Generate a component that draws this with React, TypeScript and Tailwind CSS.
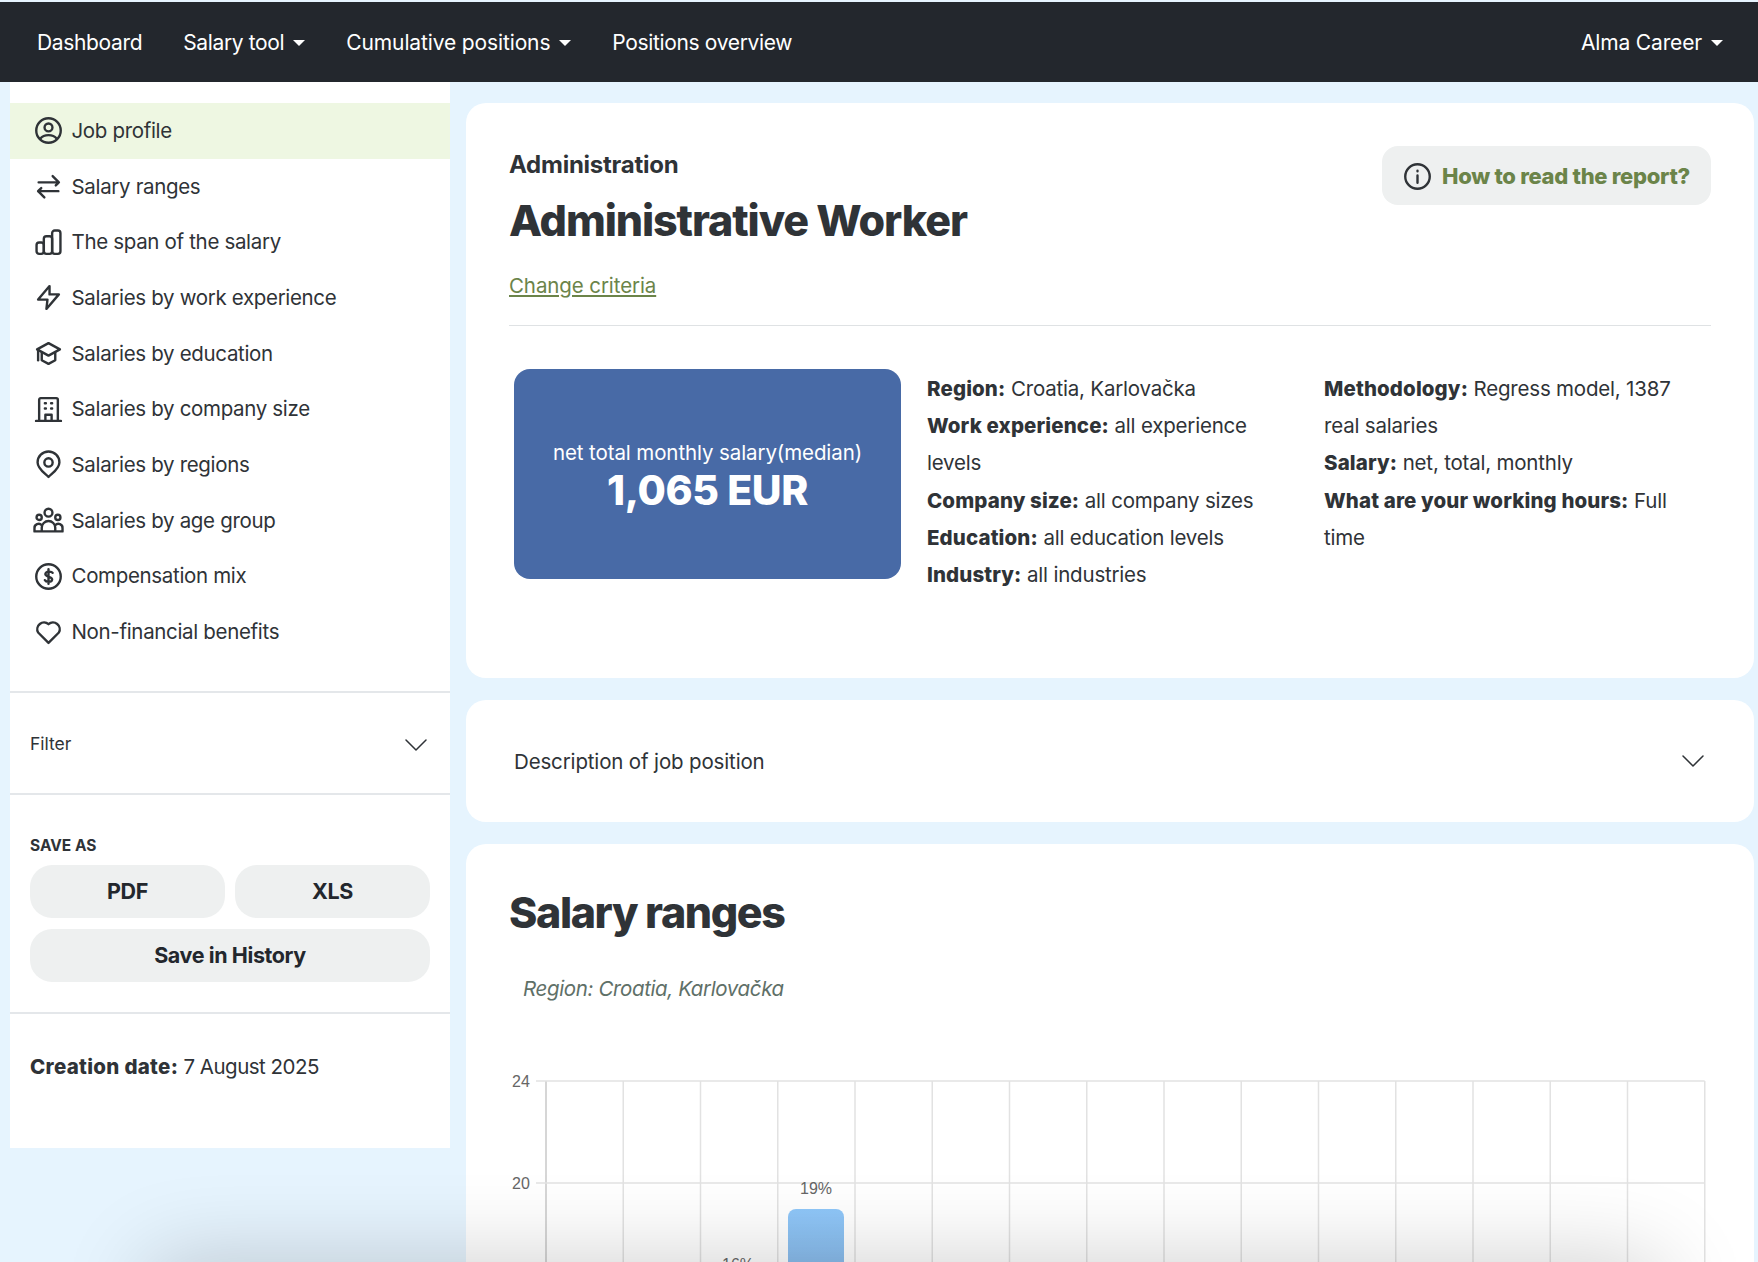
import React from "react";

const Ic: React.FC<{ children: React.ReactNode }> = ({ children }) => (
  <svg viewBox="0 0 26 26" fill="none" stroke="#2f3337" strokeWidth={2.300} strokeLinecap="round" strokeLinejoin="round" className="w-[27px] h-[27px] shrink-0 overflow-visible">
    {children}
  </svg>
);

const Chevron = () => (
  <svg viewBox="0 0 22 12" fill="none" stroke="#2f3337" strokeWidth={1.500} strokeLinecap="round" strokeLinejoin="round" className="w-[22px] h-[12px] shrink-0">
    <path d="M1 1l10 10L21 1" />
  </svg>
);

const menu: { label: string; active?: boolean; icon: React.ReactNode }[] = [
  { label: "Job profile", active: true, icon: <><circle cx="13" cy="13" r="11.800" /><circle cx="13" cy="10" r="3.800" /><path d="M5 21c2-2.500 5-3.500 8-3.500s6 1 8 3.500" /></> },
  { label: "Salary ranges", icon: <path d="M3.500 9H23M17 3l6 6-3 3M22.500 17.500H3M9 23.500l-6-6 3-3" /> },
  { label: "The span of the salary", icon: <><rect x="1.500" y="13" width="7" height="11" rx="2.500" /><rect x="8.500" y="7" width="8" height="17" rx="2.500" /><rect x="16.500" y="1.500" width="8" height="22.500" rx="2.500" /></> },
  { label: "Salaries by work experience", icon: <path d="M14 2 3 15h9l-1 9 12-14h-9z" /> },
  { label: "Salaries by education", icon: <><path d="M13 3 2 9l11 6 11-6z" /><path d="M6.500 12v7.500l6.500 3.500 6.500-3.500V12" /><path d="M3 10v9.500" /></> },
  { label: "Salaries by company size", icon: <><path d="M4 24V3.500A1.500 1.500 0 0 1 5.500 2h15A1.500 1.500 0 0 1 22 3.500V24M1 24h24" /><path d="M10 24v-6h6v6M9.500 7h1M15.500 7h1M9.500 12h1M15.500 12h1" /></> },
  { label: "Salaries by regions", icon: <><path d="M13 25C9 21 2.500 17 2.500 11a10.500 10.500 0 0 1 21 0c0 6-6.500 10-10.500 14z" /><circle cx="13" cy="11" r="4" /></> },
  { label: "Salaries by age group", icon: <><circle cx="13" cy="5.500" r="3.800" /><circle cx="4" cy="10" r="2.500" /><circle cx="22" cy="10" r="2.500" /><path d="M6.500 23v-3a6.500 6.500 0 0 1 13 0v3M-0.500 23.500v-3a4 4 0 0 1 7-3M26.500 23.500v-3a4 4 0 0 0-7-3M-0.500 23.500h27" /></> },
  { label: "Compensation mix", icon: <><circle cx="13" cy="13" r="11.800" /><path d="M17 9.500c-1-1.500-6.500-2-7 1s7 2.500 6.500 5.500-6 2.500-7 .5M13 6v14" /></> },
  { label: "Non-financial benefits", icon: <path d="M13 23 3 13a6.500 6.500 0 0 1 10-8 6.500 6.500 0 0 1 10 8z" /> },
];

const Caret = () => (
  <span className="ml-[9px] inline-block w-0 h-0 border-x-[6px] border-x-transparent border-t-[6px] border-t-white" />
);

const Navbar = () => (
  <nav className="mt-[2px] pt-[2px] h-[80px] bg-[#23272d] flex items-center justify-between pl-[37px] pr-[35px] text-white text-[21px] tracking-[-0.35px] shrink-0">
    <div className="flex items-center gap-[41px]">
      <span>Dashboard</span>
      <span className="flex items-center">Salary tool<Caret /></span>
      <span className="flex items-center tracking-[-0.13px]">Cumulative positions<Caret /></span>
      <span>Positions overview</span>
    </div>
    <span className="flex items-center tracking-[-0.15px]">Alma Career<Caret /></span>
  </nav>
);

const Sidebar = () => (
  <aside className="ml-[10px] w-[440px] h-[1066px] bg-white text-[#2f3337] shrink-0 flex flex-col">
    <ul className="pt-[21px] h-[611px] border-b-2 border-[#e4e7ea]">
      {menu.map((m) => (
        <li key={m.label} className={`h-[55.7px] flex items-center gap-[9.500px] pl-[25px] text-[20.500px] tracking-[-0.33px] ${m.active ? "bg-[#eef7e2]" : ""}`}>
          <Ic>{m.icon}</Ic>
          <span className="pt-[1px]">{m.label}</span>
        </li>
      ))}
    </ul>
    <div className="h-[102px] pt-[3px] flex items-center justify-between pl-[20px] pr-[23px] border-b-2 border-[#e4e7ea] text-[17.500px]">
      <span>Filter</span>
      <Chevron />
    </div>
    <div className="px-[20px] pt-[41px] h-[219px] border-b-2 border-[#e4e7ea]">
      <div className="text-[15.500px] font-bold leading-5 mb-[9px]">SAVE AS</div>
      <div className="grid grid-cols-2 gap-x-[10px] gap-y-[11px] text-[#23272d] text-[21.500px] font-bold tracking-[-0.4px]">
        <button className="h-[53px] rounded-[22px] bg-[#eef0f0]">PDF</button>
        <button className="h-[53px] rounded-[22px] bg-[#eef0f0]">XLS</button>
        <button className="col-span-2 h-[53px] rounded-[22px] bg-[#eef0f0]">Save in History</button>
      </div>
    </div>
    <div className="pl-[20px] pt-[38px] text-[20.500px] tracking-[-0.5px]"><b className="font-extrabold tracking-[0.3px]">Creation date:</b> 7 August 2025</div>
  </aside>
);

const Chart = () => {
  const xs = Array.from({ length: 16 }, (_, i) => 80 + i * 77.25);
  return (
    <svg viewBox="0 0 1288 200" className="w-[1288px] h-[200px] block">
      <defs>
        <linearGradient id="bar" x1="0" y1="0" x2="0" y2="1">
          <stop offset="0" stopColor="#8fc7f9" />
          <stop offset="1" stopColor="#8abcec" />
        </linearGradient>
      </defs>
      {xs.map((x, i) => <line key={x} x1={x} x2={x} y1={11} y2={200} stroke={i === 0 ? "#c9c9c9" : "#e2e2e2"} strokeWidth={1.500} />)}
      {[11, 113].map((y) => <line key={y} x1={70} x2={1238.700} y1={y} y2={y} stroke="#e2e2e2" strokeWidth={1.500} />)}
      <text x={46} y={17} fontSize={16} fontFamily="Liberation Sans" fill="#666">24</text>
      <text x={46} y={119} fontSize={16} fontFamily="Liberation Sans" fill="#666">20</text>
      <text x={350} y={124} fontSize={16} fontFamily="Liberation Sans" fill="#666" textAnchor="middle">19%</text>
      <text x={272} y={199.500} fontSize={16} fontFamily="Liberation Sans" fill="#666" textAnchor="middle">16%</text>
      <path d="M322 200v-53a8 8 0 0 1 8-8h40a8 8 0 0 1 8 8v53z" fill="url(#bar)" />
    </svg>
  );
};

const Main = () => (
  <main className="ml-[16px] mr-[4px] pt-[21px] flex-1 flex flex-col gap-[22px] text-[#2f3337]">
    <section className="bg-white rounded-[20px] h-[575px] px-[43px] shrink-0">
      <div className="h-[223px] border-b border-[#dfe2e4] relative">
        <div className="pt-[46px] text-[24px] font-bold leading-8 tracking-[-0.25px]">Administration</div>
        <h1 className="text-[43px] font-extrabold leading-[56px] mt-[11px] tracking-[-1.1px]">Administrative Worker</h1>
        <a className="block mt-[23px] text-[20.500px] tracking-[-0.1px] text-[#6b8449] underline">Change criteria</a>
        <button className="absolute right-0 top-[43px] w-[329px] h-[59px] pt-[1px] rounded-[16px] bg-[#eef0f0] flex items-center pl-[22px] gap-[11px] text-[22px] font-extrabold text-[#6b8449] tracking-[-0.3px]">
          <Ic><circle cx="13" cy="13" r="11.800" /><path d="M13 12v7M13 7.500v.5" /></Ic>
          How to read the report?
        </button>
      </div>
      <div className="flex pt-[43px] text-[20.500px] leading-[37.200px] tracking-[-0.2px]">
        <div className="ml-[5px] w-[387px] h-[210px] pt-[3px] rounded-[16px] bg-[#486aa6] text-white flex flex-col items-center justify-center shrink-0">
          <div className="text-[20.500px] leading-7 tracking-[-0.1px]">net total monthly salary(median)</div>
          <div className="text-[41px] font-extrabold leading-[46px] tracking-[-0.4px]">1,065 EUR</div>
        </div>
        <div className="ml-[26px] mr-[57px] mt-[1px] w-[340px] shrink-0">
          <div><b className="font-extrabold tracking-[0.12px]">Region:</b> Croatia, Karlovačka</div>
          <div><b className="font-extrabold tracking-[0.12px]">Work experience:</b> all experience levels</div>
          <div><b className="font-extrabold tracking-[0.12px]">Company size:</b> all company sizes</div>
          <div><b className="font-extrabold tracking-[0.12px]">Education:</b> all education levels</div>
          <div><b className="font-extrabold tracking-[0.12px]">Industry:</b> all industries</div>
        </div>
        <div className="w-[360px] mt-[1px]">
          <div><b className="font-extrabold tracking-[0.12px]">Methodology:</b> Regress model, 1387 real salaries</div>
          <div><b className="font-extrabold tracking-[0.12px]">Salary:</b> net, total, monthly</div>
          <div><b className="font-extrabold tracking-[0.12px]">What are your working hours:</b> Full time</div>
        </div>
      </div>
    </section>
    <section className="bg-white rounded-[20px] h-[122px] pl-[48px] pr-[50px] flex items-center justify-between text-[20.500px] tracking-[-0.15px] shrink-0">
      <span className="pt-[2px]">Description of job position</span>
      <Chevron />
    </section>
    <section className="bg-white rounded-t-[20px] flex-1 pl-[43px] overflow-hidden">
      <h2 className="pt-[40px] text-[43px] font-extrabold leading-[56px] tracking-[-1.4px]">Salary ranges</h2>
      <p className="mt-[35px] ml-[14px] text-[20.500px] tracking-[-0.37px] italic text-[#5f7068] leading-7">Region: Croatia, Karlovačka</p>
      <div className="-ml-[43px] mt-[67px]"><Chart /></div>
    </section>
  </main>
);

export default function App() {
  return (
    <div className="font-['Inter',sans-serif] relative w-[1758px] h-[1262px] overflow-hidden bg-[#e6f4fe] flex flex-col">
      <Navbar />
      <div className="flex flex-1 min-h-0">
        <Sidebar />
        <Main />
      </div>
      {/* soft shadow coming up from under the fold */}
      <div className="absolute left-[170px] right-[118px] top-[1282px] h-[60px] shadow-[0_0_90px_20px_rgba(0,0,0,0.2)]" />
    </div>
  );
}
